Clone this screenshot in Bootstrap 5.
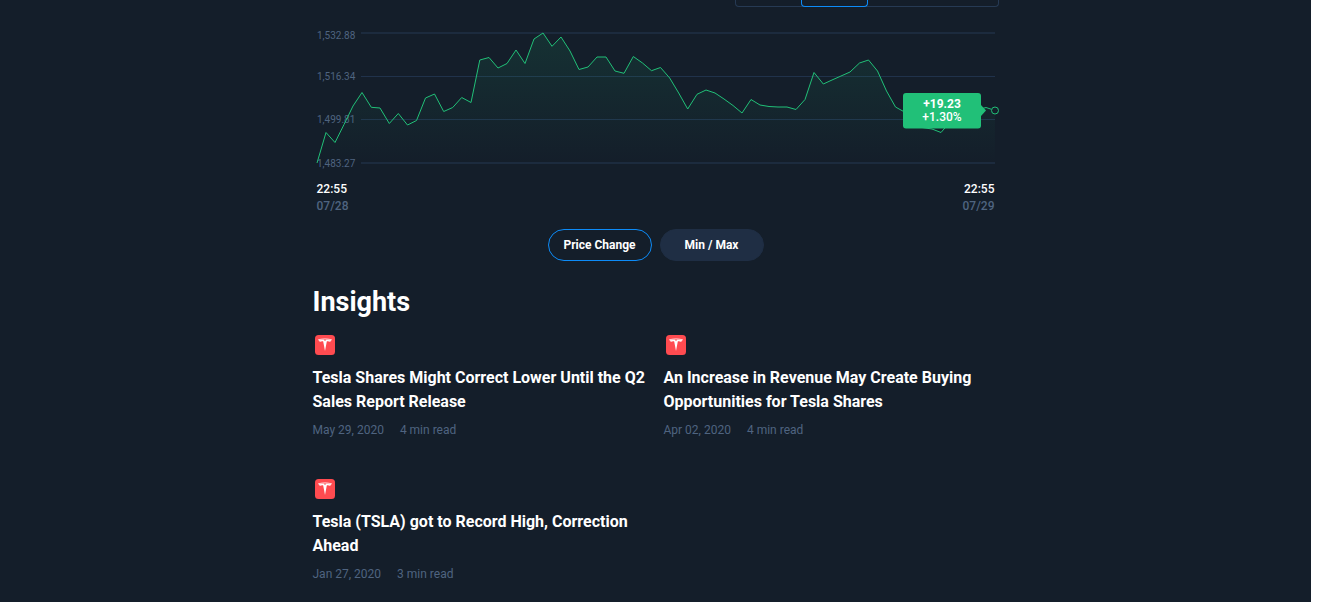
<!DOCTYPE html>
<html lang="en">
<head>
<meta charset="utf-8">
<meta name="viewport" content="width=device-width, initial-scale=1">
<title>Insights</title>
<link href="https://cdn.jsdelivr.net/npm/bootstrap@5.3.0/dist/css/bootstrap.min.css" rel="stylesheet">
<style>
  body { background: #fff; padding-right: 15px; font-family: Roboto, "Liberation Sans", sans-serif; color: #fff; }
  .page-shell { background: #141e2a; min-height: 100vh; }
  .content-column { max-width: 686px; }
  .range-tabs { width: 264px; height: 7px; border: 1px solid #263a54; border-top: 0; border-radius: 0 0 4px 4px; }
  .range-tabs button { height: 7px; border: 0; padding: 0; background: transparent; }
  .range-tabs button.selected { border: 1px solid #0d8bf7; border-top: 0; border-radius: 0 0 4px 4px; }
  .price-chart { margin-top: 13px; }
  .chart-label { font-size: 10px; fill: #4f6480; }
  .tip-text { font-size: 12px; fill: #fff; text-anchor: middle; }
  .time-row { font-size: 12px; line-height: 17px; padding: 1px 4px 0; font-weight: 500; }
  .muted-blue { color: #4f6480; }
  .pill-row { margin-top: 14px; }
  .pill-btn { width: 104px; height: 32px; padding: 0; border-radius: 16px; font-size: 12px; font-weight: 700; color: #fff; background: #1f2e44; border: 1px solid #1f2e44; }
  .pill-btn.selected { background: transparent; border-color: #0d8bf7; }
  .section-title { font-size: 27px; line-height: 36px; font-weight: 700; margin: 23px 0 13px; }
  .insight-grid { display: grid; grid-template-columns: 1fr 1fr; column-gap: 16px; row-gap: 39px; }
  .insight-title { font-size: 16px; line-height: 24px; font-weight: 700; margin: 9px 0 8px; }
  .insight-title a { color: #fff; text-decoration: none; }
  .insight-meta { font-size: 12px; line-height: 16px; }
  @media (max-width: 560px) { .insight-grid { grid-template-columns: 1fr; } }
</style>
</head>
<body>
<svg class="d-none" xmlns="http://www.w3.org/2000/svg">
  <symbol id="tesla" viewBox="0 0 24 24">
    <rect x="2" y="2" width="20" height="20" rx="3.500" fill="#ff4b50"/>
    <path fill="#fff" d="M5.200 6.300C9.200 5.300 14.800 5.300 18.800 6.300L17.900 8.200C17.200 8.600 16.500 8.700 15.700 8.600C15 8.300 14.400 8.300 13.800 8.400L12 18L10.200 8.400C9.600 8.300 9 8.300 8.300 8.600C7.500 8.700 6.800 8.600 6.100 8.200Z"/>
    <path fill="#ff4b50" d="M10.600 6.500H13.400L12 8Z"/>
    <path fill="none" stroke="#ff4b50" stroke-width=".4" d="M6 7C9.500 6.200 14.500 6.200 18 7"/>
  </symbol>
</svg>
<div class="page-shell">
  <main class="content-column mx-auto">
    <div class="range-tabs d-flex ms-auto">
      <button type="button" class="flex-fill" aria-label="Range 1"></button>
      <button type="button" class="flex-fill selected" aria-label="Range 2"></button>
      <button type="button" class="flex-fill" aria-label="Range 3"></button>
      <button type="button" class="flex-fill" aria-label="Range 4"></button>
    </div>

    <!-- one chart unit is one pixel at the column's full width -->
    <svg class="price-chart d-block w-100" viewBox="313 20 686 160" xmlns="http://www.w3.org/2000/svg">
      <defs>
        <linearGradient id="fade" gradientUnits="userSpaceOnUse" x1="0" y1="33" x2="0" y2="163">
          <stop offset="0" stop-color="#21c078" stop-opacity=".12"/>
          <stop offset="1" stop-color="#21c078" stop-opacity="0"/>
        </linearGradient>
      </defs>
      <g stroke="#1c2b3e">
        <path stroke-width="2" d="M361 33H995M361 163H995"/>
        <path stroke="#20324b" d="M361 76.500H995M361 119.500H995"/>
      </g>
      <g class="chart-label">
        <text x="317" y="39">1,532.88</text>
        <text x="317" y="80">1,516.34</text>
        <text x="317" y="123">1,499.81</text>
        <text x="317" y="167">1,483.27</text>
      </g>
      <path fill="url(#fade)" d="M317 163L326 132.500L335 142.500L344 124.500L353 106L362 92.500L371.300 107.300L380 108L389.300 123.500L398.300 113.500L407.500 125L416.500 120.500L425.500 98L434.500 94L443.700 111.500L452.700 107.500L461.700 97.500L471 102.500L479.800 60L489 57.500L498 68L507 63.500L516 50L525 63.500L534 39L543 33L552 46.300L561 37L570 51L579 69.500L588 67L597 57H606L615 71L624 73.300L633.300 56.500L642.500 63L651.500 70.700L660.500 67.500L669.700 78L678.700 93L687.700 109L697 94.300L706 90L715 93L724 99L733 105.500L742 113L751 99.500L760 105L769 106.500L778 107H787L796 109.500L805 99.500L814 72.500L823.300 84L832 80L841 76L850 72L859.500 63L868.500 60L877.500 71L886.500 91L895.500 107L904.500 112L913 122L922 127.500L932 129L941 132.500L950 122L968 112L977 110L986 107.500L995 110.500V163Z"/>
      <path fill="none" stroke="#21c078" d="M317 163L326 132.500L335 142.500L344 124.500L353 106L362 92.500L371.300 107.300L380 108L389.300 123.500L398.300 113.500L407.500 125L416.500 120.500L425.500 98L434.500 94L443.700 111.500L452.700 107.500L461.700 97.500L471 102.500L479.800 60L489 57.500L498 68L507 63.500L516 50L525 63.500L534 39L543 33L552 46.300L561 37L570 51L579 69.500L588 67L597 57H606L615 71L624 73.300L633.300 56.500L642.500 63L651.500 70.700L660.500 67.500L669.700 78L678.700 93L687.700 109L697 94.300L706 90L715 93L724 99L733 105.500L742 113L751 99.500L760 105L769 106.500L778 107H787L796 109.500L805 99.500L814 72.500L823.300 84L832 80L841 76L850 72L859.500 63L868.500 60L877.500 71L886.500 91L895.500 107L904.500 112L913 122L922 127.500L932 129L941 132.500L950 122L968 112L977 110L986 107.500L991.500 109.300"/>
      <circle cx="995" cy="110.500" r="3.500" fill="#141e2a" stroke="#21c078"/>
      <rect x="903" y="93" width="78" height="35.500" rx="3" fill="#21c078"/>
      <path fill="#21c078" d="M981 105L986 110.500L981 116Z"/>
      <text class="tip-text" x="942" y="108" font-weight="700">+19.23</text>
      <text class="tip-text" x="942" y="121" font-weight="500">+1.30%</text>
    </svg>

    <div class="time-row d-flex justify-content-between">
      <div>22:55<br><span class="muted-blue">07/28</span></div>
      <div class="text-end">22:55<br><span class="muted-blue">07/29</span></div>
    </div>

    <div class="pill-row d-flex justify-content-center gap-2">
      <button type="button" class="pill-btn selected">Price Change</button>
      <button type="button" class="pill-btn">Min / Max</button>
    </div>

    <h2 class="section-title">Insights</h2>
    <div class="insight-grid">
      <article>
        <svg class="d-block" width="24" height="24" aria-hidden="true"><use href="#tesla"/></svg>
        <h3 class="insight-title"><a href="#">Tesla Shares Might Correct Lower Until the Q2 Sales Report Release</a></h3>
        <div class="insight-meta muted-blue d-flex gap-3"><span>May 29, 2020</span><span>4 min read</span></div>
      </article>
      <article>
        <svg class="d-block" width="24" height="24" aria-hidden="true"><use href="#tesla"/></svg>
        <h3 class="insight-title"><a href="#">An Increase in Revenue May Create Buying Opportunities for Tesla Shares</a></h3>
        <div class="insight-meta muted-blue d-flex gap-3"><span>Apr 02, 2020</span><span>4 min read</span></div>
      </article>
      <article>
        <svg class="d-block" width="24" height="24" aria-hidden="true"><use href="#tesla"/></svg>
        <h3 class="insight-title"><a href="#">Tesla (TSLA) got to Record High, Correction Ahead</a></h3>
        <div class="insight-meta muted-blue d-flex gap-3"><span>Jan 27, 2020</span><span>3 min read</span></div>
      </article>
    </div>
  </main>
</div>
<script src="https://cdn.jsdelivr.net/npm/bootstrap@5.3.0/dist/js/bootstrap.bundle.min.js"></script>
</body>
</html>
